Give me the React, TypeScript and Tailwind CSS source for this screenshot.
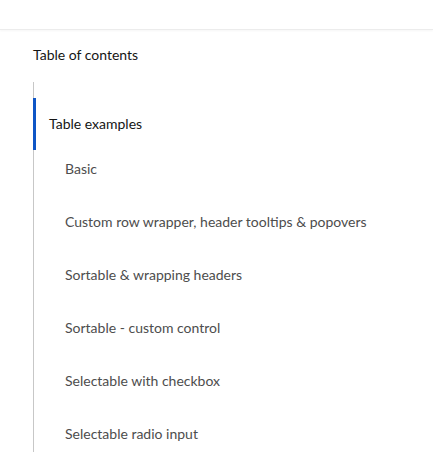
import React from "react";

const items = [
  "Basic",
  "Custom row wrapper, header tooltips & popovers",
  "Sortable & wrapping headers",
  "Sortable - custom control",
  "Selectable with checkbox",
  "Selectable radio input",
];

export default function App() {
  return (
    <div
      className="w-[433px] h-[452px] overflow-hidden bg-white"
      style={{ fontFamily: 'Lato, "Noto Sans", sans-serif' }}
    >
      <div className="h-[30px] border-b border-[#ececec] shadow-[0_1px_2px_rgba(0,0,0,0.04)]" />
      <div className="pl-[33px]">
        <div className="mt-[15px] h-[21px] leading-[19px] text-[14px] text-[#151515]">
          Table of contents
        </div>
        <div className="mt-[16px] border-l border-[#c7c7c7] pt-[16px] h-[400px]">
          <div className="relative h-[52px] flex items-center pl-[15px] pb-[2px] text-[14px] text-[#151515]">
            <div className="absolute left-[-1px] top-0 bottom-0 w-[3px] bg-[#0f56c6]" />
            Table examples
          </div>
          <div className="flex flex-col gap-[15px]">
            {items.map((t) => (
              <div
                key={t}
                className="h-[38px] flex items-center pl-[31px] pb-[2px] text-[14px] text-[#4d4d4d]"
              >
                {t}
              </div>
            ))}
          </div>
        </div>
      </div>
    </div>
  );
}
